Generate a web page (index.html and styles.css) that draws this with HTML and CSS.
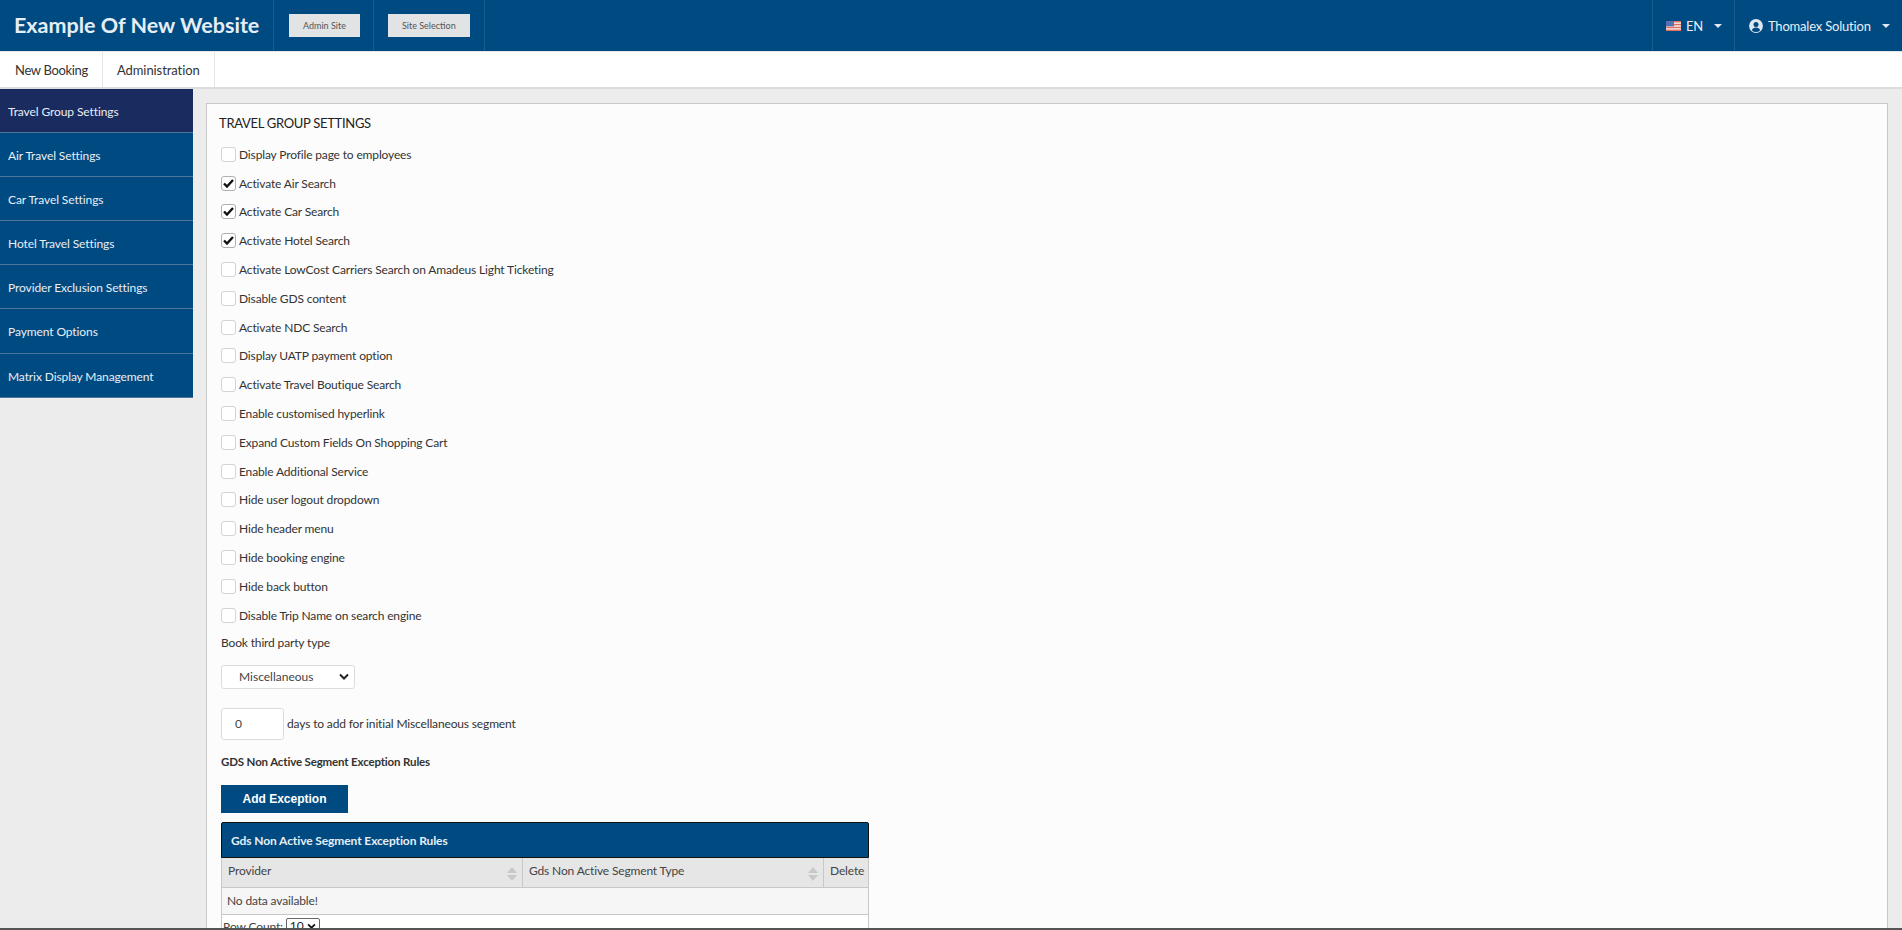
FILE: index.html
```html
<!DOCTYPE html>
<html lang="en">

<head>
    <meta charset="UTF-8">
    <meta name="viewport" content="width=device-width, initial-scale=1.0">
    <title>Travel Group Settings</title>
    <link rel="stylesheet" href="styles.css">
</head>

<body>
    <header class="topbar">
        <div class="brand">Example Of New Website</div>
        <div class="top-cell"><button class="top-btn">Admin Site</button></div>
        <div class="top-cell top-cell-second"><button class="top-btn">Site Selection</button></div>
        <div class="top-right">
            <div class="top-menu lang">
                <svg class="flag" viewBox="0 0 15 10" width="15" height="10">
                    <rect width="15" height="10" fill="#f4e9e6"/>
                    <rect y="0" width="15" height="1.4" fill="#e0705f"/>
                    <rect y="2.9" width="15" height="1.4" fill="#e0705f"/>
                    <rect y="5.8" width="15" height="1.4" fill="#e0705f"/>
                    <rect y="8.6" width="15" height="1.4" fill="#e0705f"/>
                    <rect width="8" height="5.4" fill="#5a6fb0"/>
                </svg>
                <span>EN</span>
                <span class="caret"></span>
            </div>
            <div class="top-menu user">
                <svg class="user-icon" viewBox="0 0 14 14" width="14" height="14">
                    <circle cx="7" cy="7" r="6.9" fill="#dfe8f0"/>
                    <circle cx="7" cy="5.4" r="2.5" fill="#004a82"/>
                    <path d="M2.8 11.2c.7-2 2.3-2.8 4.2-2.8s3.500.8 4.200 2.800a5.600 5.600 0 0 1-8.400 0z" fill="#004a82"/>
                </svg>
                <span>Thomalex Solution</span>
                <span class="caret"></span>
            </div>
        </div>
    </header>

    <nav class="mainnav">
        <a class="nav-item">New Booking</a>
        <a class="nav-item nav-admin">Administration</a>
    </nav>

    <div class="page">
        <aside class="sidebar">
            <a class="side-item active">Travel Group Settings</a>
            <a class="side-item">Air Travel Settings</a>
            <a class="side-item">Car Travel Settings</a>
            <a class="side-item">Hotel Travel Settings</a>
            <a class="side-item">Provider Exclusion Settings</a>
            <a class="side-item">Payment Options</a>
            <a class="side-item">Matrix Display Management</a>
        </aside>

        <main class="content">
            <section class="panel">
                <h2 class="panel-title">TRAVEL GROUP SETTINGS</h2>

                <div class="check-list">
                    <label class="check"><span class="box"></span>Display Profile page to employees</label>
                    <label class="check"><span class="box on"><svg viewBox="0 0 13 13" width="13" height="13"><path d="M2 6.500l3 3 6-6.500" fill="none" stroke="#111" stroke-width="2.400"/></svg></span>Activate Air Search</label>
                    <label class="check"><span class="box on"><svg viewBox="0 0 13 13" width="13" height="13"><path d="M2 6.500l3 3 6-6.500" fill="none" stroke="#111" stroke-width="2.400"/></svg></span>Activate Car Search</label>
                    <label class="check"><span class="box on"><svg viewBox="0 0 13 13" width="13" height="13"><path d="M2 6.500l3 3 6-6.500" fill="none" stroke="#111" stroke-width="2.400"/></svg></span>Activate Hotel Search</label>
                    <label class="check"><span class="box"></span>Activate LowCost Carriers Search on Amadeus Light Ticketing</label>
                    <label class="check"><span class="box"></span>Disable GDS content</label>
                    <label class="check"><span class="box"></span>Activate NDC Search</label>
                    <label class="check"><span class="box"></span>Display UATP payment option</label>
                    <label class="check"><span class="box"></span>Activate Travel Boutique Search</label>
                    <label class="check"><span class="box"></span>Enable customised hyperlink</label>
                    <label class="check"><span class="box"></span>Expand Custom Fields On Shopping Cart</label>
                    <label class="check"><span class="box"></span>Enable Additional Service</label>
                    <label class="check"><span class="box"></span>Hide user logout dropdown</label>
                    <label class="check"><span class="box"></span>Hide header menu</label>
                    <label class="check"><span class="box"></span>Hide booking engine</label>
                    <label class="check"><span class="box"></span>Hide back button</label>
                    <label class="check"><span class="box"></span>Disable Trip Name on search engine</label>
                </div>

                <div class="field-label">Book third party type</div>
                <div class="select-box">
                    <span>Miscellaneous</span>
                    <svg class="chevron" viewBox="0 0 10 7" width="10" height="7"><path d="M1 1.500l4 4 4-4" fill="none" stroke="#222" stroke-width="2"/></svg>
                </div>

                <div class="days-row">
                    <div class="days-input">0</div>
                    <span>days to add for initial Miscellaneous segment</span>
                </div>

                <div class="rules-label">GDS Non Active Segment Exception Rules</div>
                <button class="add-btn">Add Exception</button>

                <div class="grid">
                    <div class="grid-title">Gds Non Active Segment Exception Rules</div>
                    <div class="grid-head">
                        <div class="col col-provider">Provider<span class="sort"></span></div>
                        <div class="col col-type">Gds Non Active Segment Type<span class="sort"></span></div>
                        <div class="col col-delete">Delete</div>
                    </div>
                    <div class="grid-empty">No data available!</div>
                    <div class="grid-foot">
                        Row Count:
                        <span class="row-select">10
                            <svg viewBox="0 0 10 7" width="9" height="6"><path d="M1 1.500l4 4 4-4" fill="none" stroke="#111" stroke-width="2"/></svg>
                        </span>
                    </div>
                </div>
            </section>
        </main>
    </div>

    <div class="window-edge"></div>
</body>

</html>
```

FILE: styles.css
```css
* {
    box-sizing: border-box;
}

html, body {
    height: 100%;
}

body {
    margin: 0;
    overflow: hidden;
    background: #ececec;
    font-family: Lato, "Open Sans", sans-serif;
    font-size: 12px;
    letter-spacing: -0.15px;
    color: #333;
}

.topbar {
    height: 51px;
    display: flex;
    background: #004a82;
    color: #e8eef4;
}

.brand {
    width: 274px;
    flex-shrink: 0;
    padding-left: 14px;
    font-size: 21.500px;
    font-weight: 700;
    line-height: 50px;
    letter-spacing: 0;
    white-space: nowrap;
    color: #e6eef5;
    border-right: 1px solid #1a5c8f;
}

.top-cell {
    width: 100px;
    display: flex;
    align-items: center;
    padding-left: 15px;
    border-right: 1px solid #1a5c8f;
}

.top-cell-second {
    width: 111px;
    padding-left: 14px;
}

.top-btn {
    height: 23px;
    padding: 0 14px;
    border: none;
    background: #e1e3e5;
    color: #555;
    font-family: inherit;
    font-size: 9px;
    white-space: nowrap;
}

.top-right {
    margin-left: auto;
    display: flex;
}

.top-menu {
    display: flex;
    align-items: center;
    height: 51px;
    font-size: 13px;
    letter-spacing: -0.2px;
    border-left: 1px solid #1a5c8f;
}

.lang {
    width: 82px;
    padding-left: 13px;
}

.lang span:first-of-type {
    margin-left: 5px;
}

.lang .caret {
    margin-left: 11px;
}

.user {
    width: 168px;
    padding-left: 14px;
}

.user span:first-of-type {
    margin-left: 5px;
}

.user .caret {
    margin-left: 11px;
}

.caret {
    width: 0;
    height: 0;
    border-left: 4px solid transparent;
    border-right: 4px solid transparent;
    border-top: 4px solid #dfe8f0;
}

.mainnav {
    height: 38px;
    display: flex;
    background: #fff;
    border-top: 1px solid #e4e4e4;
    border-bottom: 2px solid #dcdcdc;
}

.nav-item {
    display: flex;
    align-items: center;
    padding: 0 14px 0 15px;
    font-size: 13px;
    letter-spacing: -0.33px;
    color: #333;
    border-right: 1px solid #e6e6e6;
}

.nav-admin {
    padding-left: 14px;
    letter-spacing: -0.08px;
}

.page {
    display: flex;
    align-items: flex-start;
}

.sidebar {
    width: 193px;
    flex-shrink: 0;
}

.side-item {
    display: block;
    height: 44.100px;
    padding-left: 8px;
    line-height: 45px;
    font-size: 12px;
    letter-spacing: -0.1px;
    color: #e8eef4;
    background: #004a82;
    border-bottom: 1px solid #4d7699;
}

.side-item.active {
    background: #1a2b5f;
}

.content {
    flex: 1;
    padding: 14px 14px 0 13px;
}

.panel {
    background: #fcfcfc;
    border: 1px solid #c8c8c8;
    padding: 0 12px 20px;
}

.panel-title {
    margin: 0;
    padding-top: 10px;
    font-size: 13px;
    font-weight: 400;
    line-height: 18px;
    letter-spacing: -0.3px;
    color: #222;
}

.check-list {
    margin-top: 8px;
}

.check {
    display: flex;
    align-items: center;
    height: 28.8px;
    padding-left: 2px;
    font-size: 12px;
    color: #333;
}

.box {
    width: 15px;
    height: 15px;
    margin-right: 3px;
    background: #fff;
    border: 1px solid #d4d4d4;
    border-radius: 3px;
}

.box svg {
    display: block;
}

.box.on {
    border-color: #b0b0b0;
}

.field-label {
    margin-top: 5px;
    padding-left: 2px;
    line-height: 16px;
    color: #333;
}

.select-box {
    width: 134px;
    height: 24px;
    margin: 14px 0 0 2px;
    padding: 0 5px 0 17px;
    display: flex;
    align-items: center;
    justify-content: space-between;
    background: #fff;
    border: 1px solid #dcdcdc;
    border-radius: 3px;
    letter-spacing: 0;
    color: #444;
}

.days-row {
    display: flex;
    align-items: center;
    gap: 3px;
    margin: 19px 0 0 2px;
}

.days-input {
    width: 63px;
    height: 32px;
    padding: 0 0 0 13px;
    line-height: 30px;
    background: #fff;
    border: 1px solid #dcdcdc;
    border-radius: 3px;
    color: #444;
}

.rules-label {
    margin: 14px 0 0 2px;
    font-size: 11.500px;
    font-weight: 700;
    line-height: 16px;
    color: #333;
}

.add-btn {
    display: block;
    width: 127px;
    height: 28px;
    margin: 15px 0 0 2px;
    border: none;
    background: #004a82;
    color: #fff;
    font-family: "Liberation Sans", Arial, sans-serif;
    font-size: 12px;
    font-weight: 700;
    letter-spacing: 0;
}

.grid {
    width: 648px;
    margin: 9px 0 0 2px;
}

.grid-title {
    height: 36px;
    padding-left: 9px;
    line-height: 36px;
    font-size: 12px;
    font-weight: 700;
    letter-spacing: -0.1px;
    color: #e6eef5;
    background: #004a82;
    border: 1px solid #111;
    border-radius: 2px 2px 0 0;
}

.grid-head {
    display: flex;
    height: 30px;
    background: #e6e6e6;
    border-left: 1px solid #c8c8c8;
    border-right: 1px solid #c8c8c8;
    border-bottom: 1px solid #c8c8c8;
}

.col {
    position: relative;
    padding-left: 6px;
    line-height: 25px;
    color: #444;
    border-right: 1px solid #c8c8c8;
}

.col-provider {
    width: 301px;
}

.col-type {
    width: 301px;
}

.col-delete {
    flex: 1;
    border-right: none;
    padding-left: 6px;
}

.sort {
    position: absolute;
    right: 5px;
    top: 9px;
    width: 10px;
    height: 14px;
}

.sort::before,
.sort::after {
    content: "";
    position: absolute;
    left: 0;
    border-left: 5px solid transparent;
    border-right: 5px solid transparent;
}

.sort::before {
    top: 0;
    border-bottom: 6px solid #c8c8c8;
}

.sort::after {
    bottom: 0;
    border-top: 6px solid #c8c8c8;
}

.grid-empty {
    height: 27px;
    padding-left: 5px;
    line-height: 26px;
    background: #f6f6f6;
    border: 1px solid #c8c8c8;
    border-top: none;
    color: #444;
}

.grid-foot {
    height: 30px;
    padding: 3px 0 0 1px;
    background: #fff;
    border-left: 1px solid #c8c8c8;
    border-right: 1px solid #c8c8c8;
    color: #444;
}

.row-select {
    display: inline-flex;
    align-items: center;
    gap: 4px;
    height: 16px;
    padding: 0 3px 0 3px;
    background: #fff;
    border: 1px solid #666;
    border-radius: 2px;
    color: #222;
}

.window-edge {
    position: fixed;
    left: 0;
    right: 0;
    bottom: 0;
    height: 2px;
    background: #555;
}
```
